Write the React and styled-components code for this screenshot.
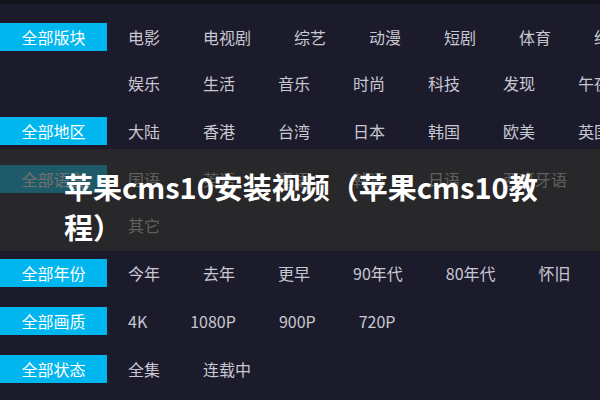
import React from "react";
import styled, { createGlobalStyle } from "styled-components";

const GlobalStyle = createGlobalStyle`
  html, body { margin: 0; padding: 0; }
  body {
    background: #1c1b2b;
    font-family: "Noto Sans CJK SC", "Noto Sans", sans-serif;
  }
`;

const Page = styled.div`
  position: relative;
  width: 600px;
  height: 400px;
  overflow: hidden;
  box-sizing: border-box;
  background: #1c1b2b;
  border-top: 4px solid #13131d;
  padding-top: 10px;
`;

const Group = styled.div`
  margin-bottom: 2px;
`;

const Line = styled.div`
  display: flex;
  align-items: center;
  height: 46px;
`;

const LabelCell = styled.div`
  flex: 0 0 128px;
`;

const Label = styled.div`
  width: 107px;
  height: 28px;
  background: #00b6ee;
  color: #ffffff;
  font-size: 16px;
  display: flex;
  align-items: center;
  justify-content: center;
`;

const Items = styled.div`
  display: flex;
  gap: 43px;
  white-space: nowrap;
`;

const Item = styled.span`
  font-size: 16px;
  color: #c8c8d2;
`;

const Overlay = styled.div`
  position: absolute;
  left: 0;
  right: 0;
  top: 145px;
  height: 102px;
  background: rgba(46, 45, 42, 0.68);
  box-sizing: border-box;
  padding: 17px 0 0 64px;
`;

const Title = styled.h1`
  margin: 0;
  width: 490px;
  font-size: 29px;
  font-weight: 700;
  line-height: 40px;
  color: #ffffff;
`;

const groups = [
  {
    label: "全部版块",
    lines: [
      ["电影", "电视剧", "综艺", "动漫", "短剧", "体育", "纪录片"],
      ["娱乐", "生活", "音乐", "时尚", "科技", "发现", "午夜"],
    ],
  },
  { label: "全部地区", lines: [["大陆", "香港", "台湾", "日本", "韩国", "欧美", "英国"]] },
  {
    label: "全部语言",
    lines: [
      ["国语", "英语", "粤语", "韩语", "日语", "西班牙语", "法语"],
      ["其它"],
    ],
  },
  { label: "全部年份", lines: [["今年", "去年", "更早", "90年代", "80年代", "怀旧"]] },
  { label: "全部画质", lines: [["4K", "1080P", "900P", "720P"]] },
  { label: "全部状态", lines: [["全集", "连载中"]] },
];

export default function App() {
  return (
    <>
      <GlobalStyle />
      <Page>
        {groups.map((g) => (
          <Group key={g.label}>
            {g.lines.map((items, i) => (
              <Line key={i}>
                <LabelCell>{i === 0 && <Label>{g.label}</Label>}</LabelCell>
                <Items>
                  {items.map((t) => (
                    <Item key={t}>{t}</Item>
                  ))}
                </Items>
              </Line>
            ))}
          </Group>
        ))}
        <Overlay>
          <Title>苹果cms10安装视频（苹果cms10教程）</Title>
        </Overlay>
      </Page>
    </>
  );
}
